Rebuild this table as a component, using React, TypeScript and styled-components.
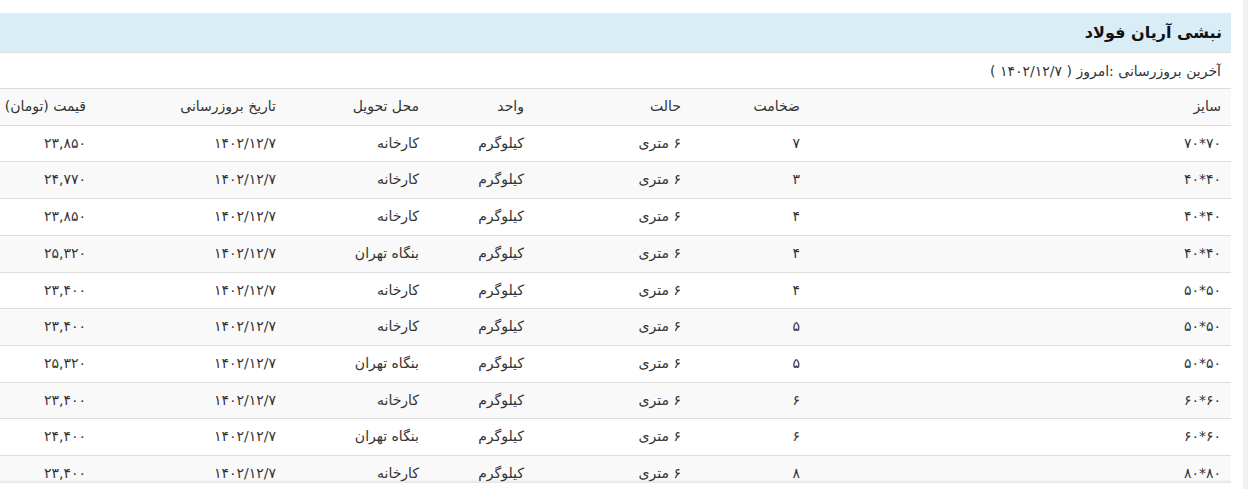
import React from "react";
import styled, { createGlobalStyle } from "styled-components";

const Global = createGlobalStyle`
  html, body { margin: 0; padding: 0; background: #ffffff; }
  body { font-family: "DejaVu Sans", "Noto Sans", sans-serif; color: #333; }
`;

const Page = styled.div`
  display: flex;
  justify-content: space-between;
  height: 489px;
  overflow: hidden;
`;

const Viewport = styled.div`
  position: relative;
  width: 1231px;
  height: 483px;
  padding-top: 13px;
  box-sizing: border-box;
  overflow: hidden;
  &::after {
    content: "";
    position: absolute;
    left: 0;
    right: 0;
    bottom: 0;
    height: 4px;
    pointer-events: none;
    background: linear-gradient(to bottom, rgba(0,0,0,0), rgba(0,0,0,0.08));
  }
`;

const Strip = styled.div`
  width: 5px;
  background: #f1f1f1;
`;

const Panel = styled.div`
  direction: rtl;
`;

const Heading = styled.div`
  height: 39px;
  background: #d9edf7;
  border-bottom: 1px solid #dddddd;
  display: flex;
  align-items: center;
  padding: 0 9px;
  font-size: 16px;
  font-weight: bold;
  color: #111;
`;

const Updated = styled.div`
  height: 35px;
  display: flex;
  align-items: center;
  padding: 0 10px;
  font-size: 14px;
  color: #333;
  border-bottom: 1px solid #dddddd;
`;

const Table = styled.table`
  width: 1231px;
  border-collapse: collapse;
  table-layout: fixed;
  font-size: 14px;
`;

const HeadCell = styled.th<{ $w: number }>`
  box-sizing: border-box;
  width: ${(p) => p.$w}px;
  text-align: right;
  font-weight: normal;
  padding: 8px 10px 8px 0;
  line-height: 19.7px;
  white-space: nowrap;
  color: #333;
`;

const Row = styled.tr<{ $alt: boolean }>`
  background: ${(p) => (p.$alt ? "#f9f9f9" : "#ffffff")};
  border-bottom: 1px solid #dddddd;
`;

const Cell = styled.td`
  box-sizing: border-box;
  text-align: right;
  padding: 8px 10px 8px 0;
  line-height: 19.7px;
  white-space: nowrap;
  color: #333;
`;

const widths = [421, 119, 157, 105, 143, 190, 96];
const headers = ["سایز", "ضخامت", "حالت", "واحد", "محل تحویل", "تاریخ بروزرسانی", "قیمت (تومان)"];

const rows: string[][] = [
  ["۷۰*۷۰", "۷", "کارخانه", "۲۳,۸۵۰"],
  ["۴۰*۴۰", "۳", "کارخانه", "۲۴,۷۷۰"],
  ["۴۰*۴۰", "۴", "کارخانه", "۲۳,۸۵۰"],
  ["۴۰*۴۰", "۴", "بنگاه تهران", "۲۵,۳۲۰"],
  ["۵۰*۵۰", "۴", "کارخانه", "۲۳,۴۰۰"],
  ["۵۰*۵۰", "۵", "کارخانه", "۲۳,۴۰۰"],
  ["۵۰*۵۰", "۵", "بنگاه تهران", "۲۵,۳۲۰"],
  ["۶۰*۶۰", "۶", "کارخانه", "۲۳,۴۰۰"],
  ["۶۰*۶۰", "۶", "بنگاه تهران", "۲۴,۴۰۰"],
  ["۸۰*۸۰", "۸", "کارخانه", "۲۳,۴۰۰"],
];

export default function App() {
  return (
    <>
      <Global />
      <Page>
        <Viewport>
          <Panel>
            <Heading>نبشی آریان فولاد</Heading>
            <Updated>آخرین بروزرسانی :امروز ( ۱۴۰۲/۱۲/۷ )</Updated>
            <Table>
              <thead>
                <Row $alt={true}>
                  {headers.map((h, i) => (
                    <HeadCell key={h} $w={widths[i]}>{h}</HeadCell>
                  ))}
                </Row>
              </thead>
              <tbody>
                {rows.map((r, i) => (
                  <Row key={i} $alt={i % 2 === 1}>
                    <Cell>{r[0]}</Cell>
                    <Cell>{r[1]}</Cell>
                    <Cell>۶ متری</Cell>
                    <Cell>کیلوگرم</Cell>
                    <Cell>{r[2]}</Cell>
                    <Cell>۱۴۰۲/۱۲/۷</Cell>
                    <Cell>{r[3]}</Cell>
                  </Row>
                ))}
              </tbody>
            </Table>
          </Panel>
        </Viewport>
        <Strip />
      </Page>
    </>
  );
}
